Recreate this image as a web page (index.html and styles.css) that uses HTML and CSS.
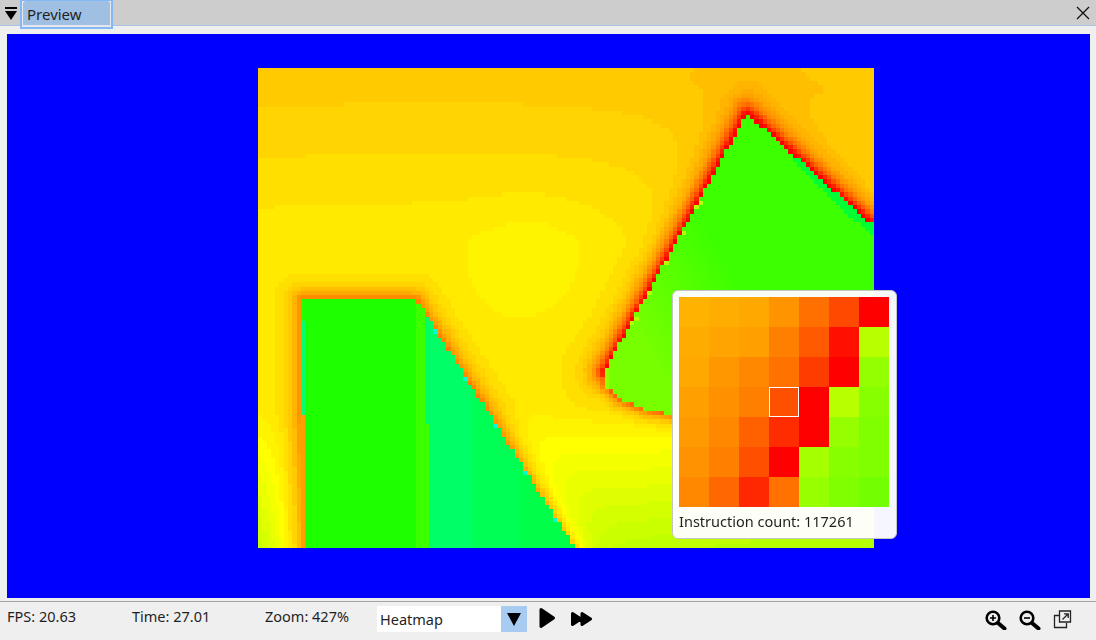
FILE: index.html
```html
<!DOCTYPE html>
<html lang="en">
<head>
<meta charset="utf-8">
<title>Preview</title>
<link rel="stylesheet" href="styles.css">
</head>
<body>
<div class="app">
  <header class="tabbar">
    <svg class="menu-icon" width="14" height="16" viewBox="0 0 14 16"><rect x="1" y="3" width="12" height="2"/><path d="M1 7h12l-6 9z"/></svg>
    <div class="tab">Preview</div>
    <svg class="close-icon" width="14" height="14" viewBox="0 0 14 14"><path d="M1 1l12 12M13 1L1 13"/></svg>
  </header>
  <main class="viewport">
    <canvas id="heat" class="heat" width="144" height="112"></canvas>
    <div class="tip">
      <div class="tip-grid">
        <i style="background:#ffb300"></i><i style="background:#ffad00"></i><i style="background:#ffa800"></i><i style="background:#ff9400"></i><i style="background:#ff7000"></i><i style="background:#ff4800"></i><i style="background:#ff0000"></i>
        <i style="background:#ffac00"></i><i style="background:#ffa400"></i><i style="background:#ff9f00"></i><i style="background:#ff8000"></i><i style="background:#ff5a00"></i><i style="background:#ff1000"></i><i style="background:#b8ff00"></i>
        <i style="background:#ffa800"></i><i style="background:#ff9800"></i><i style="background:#ff8800"></i><i style="background:#ff7200"></i><i style="background:#ff3c00"></i><i style="background:#ff0000"></i><i style="background:#93ff00"></i>
        <i style="background:#ffa000"></i><i style="background:#ff9000"></i><i style="background:#ff7f00"></i><i class="picked" style="background:#ff5000"></i><i style="background:#ff0000"></i><i style="background:#b8ff00"></i><i style="background:#88ff00"></i>
        <i style="background:#ff9a00"></i><i style="background:#ff8800"></i><i style="background:#ff6000"></i><i style="background:#ff2c00"></i><i style="background:#ff0000"></i><i style="background:#95ff00"></i><i style="background:#7fff00"></i>
        <i style="background:#ff9200"></i><i style="background:#ff8000"></i><i style="background:#ff5000"></i><i style="background:#ff0000"></i><i style="background:#a6ff00"></i><i style="background:#88ff00"></i><i style="background:#7fff00"></i>
        <i style="background:#ff8800"></i><i style="background:#ff6800"></i><i style="background:#ff2800"></i><i style="background:#ff7200"></i><i style="background:#96ff00"></i><i style="background:#7fff00"></i><i style="background:#72ff00"></i>
      </div>
      <div class="tip-text">Instruction count: 117261</div>
    </div>
  </main>
  <footer class="status">
    <span class="stat stat-fps">FPS: 20.63</span>
    <span class="stat stat-time">Time: 27.01</span>
    <span class="stat stat-zoom">Zoom: 427%</span>
    <div class="combo">
      <span class="combo-label">Heatmap</span>
      <span class="combo-btn"><svg width="14" height="13" viewBox="0 0 14 13"><path d="M0 0h14L7 13z"/></svg></span>
    </div>
    <svg class="play" width="17" height="22" viewBox="0 0 17 22"><path d="M2 2.500L14.500 11 2 19.500z"/></svg>
    <svg class="ffwd" width="21" height="14" viewBox="0 0 21 14"><path d="M1.500 1.500L10 7l-8.500 5.500zM11 1.500L19.500 7 11 12.500z"/></svg>
    <span class="spacer"></span>
    <svg class="tool" width="22" height="20" viewBox="0 0 22 20"><circle cx="8" cy="8" r="6.300"/><path class="handle" d="M13 13l6.500 5.500"/><path class="thin" d="M5 8h6M8 5v6"/></svg>
    <svg class="tool" width="22" height="20" viewBox="0 0 22 20"><circle cx="8" cy="8" r="6.300"/><path class="handle" d="M13 13l6.500 5.500"/><path class="thin" d="M5 8h6"/></svg>
    <svg class="tool-copy" width="19" height="19" viewBox="0 0 19 19"><path d="M6.500 1h11v11h-11zM6 5.500H1.500v12h12V13"/><path d="M9.500 9.500L15 4M11 3.800h4.200V8"/></svg>
  </footer>
</div>
<script src="app.js"></script>
</body>
</html>
```
FILE: styles.css
```css
* { box-sizing: border-box; }
html, body { margin: 0; padding: 0; }
body { width: 1096px; height: 640px; overflow: hidden; background: #efefef; font-family: "Noto Sans", sans-serif; font-size: 14.5px; color: #1f1f1f; }
.app { display: flex; flex-direction: column; height: 640px; }

.tabbar { position: relative; flex: none; height: 26px; background: #cdcdcd; border-bottom: 1px solid #a9c4e2; display: flex; align-items: flex-start; }
.menu-icon { margin: 4px 2px 0 4px; flex: none; }
.tab { width: 93px; height: 29px; border: 2px solid #84b9f5; border-top-width: 1px; position: relative; z-index: 1; background: #e4e8ee; font-size: 15px; line-height: 26px; padding-left: 5px; }
.tab::before { content: ""; position: absolute; left: 1px; right: 1px; top: 0; height: 24px; background: #9fc0e3; border-radius: 3px 3px 0 0; z-index: -1; }
.close-icon { margin: 6px 6px 0 auto; fill: none; stroke: #111; stroke-width: 1.300; flex: none; }

.viewport { position: relative; flex: none; height: 564px; margin: 8px 6px 0 7px; background: #0000ff; }
.heat { position: absolute; left: 251px; top: 34px; width: 616px; height: 480px; image-rendering: pixelated; display: block; }

.tip { position: absolute; left: 665px; top: 256px; width: 225px; height: 249px; padding: 6px; border: 1px solid #c4c4c4; border-radius: 6px; background: rgba(255, 255, 255, .965); }
.tip-grid { display: grid; grid-template-columns: repeat(7, 30px); grid-auto-rows: 30px; }
.tip-grid i { display: block; }
.tip-grid .picked { border: 1px solid #fff; }
.tip-text { margin-top: 4px; line-height: 20px; white-space: nowrap; }

.status { flex: none; margin-top: 3px; height: 38px; border-top: 1px solid #a3a3a3; padding: 4px 5px 0 7px; display: flex; align-items: flex-start; }
.stat { white-space: nowrap; line-height: 21px; }
.stat-fps { width: 125px; }
.stat-time { width: 133px; }
.stat-zoom { width: 112px; }
.combo { width: 150px; height: 26px; background: #fff; display: flex; flex: none; }
.combo-label { flex: 1; padding-left: 3px; line-height: 26px; }
.combo-btn { width: 26px; background: #a8cbf2; display: flex; align-items: center; justify-content: center; }
.combo-btn svg { display: block; }
.play { margin: 1px 0 0 12px; flex: none; stroke: #000; stroke-width: 3; stroke-linejoin: round; }
.ffwd { margin: 6px 0 0 15px; flex: none; stroke: #000; stroke-width: 3; stroke-linejoin: round; }
.spacer { flex: 1; }
.tool { flex: none; margin: 4px 12px 0 0; fill: none; stroke: #000; stroke-width: 2.600; }
.tool .handle { stroke-width: 4; stroke-linecap: round; }
.tool .thin { stroke-width: 1.600; }
.tool-copy { flex: none; margin: 4px 19px 0 0; fill: none; stroke: #222; stroke-width: 1.300; }
```
FILE: app.js
```js
(function () {
  var cv = document.getElementById('heat');
  var ctx = cv.getContext('2d');
  var W = 144, H = 112, SX = 616 / W, SY = 480 / H, OX = 258, OY = 68;

  var rectShape = [[301, 299], [416, 299], [575, 548], [301, 548]];
  var triShape = [[747, 114], [874, 226], [874, 430], [672, 414], [648, 410], [620, 399], [604, 385], [604, 372]];

  function inside(p, x, y) {
    var c = false;
    for (var i = 0, j = p.length - 1; i < p.length; j = i++) {
      if ((p[i][1] > y) !== (p[j][1] > y) &&
          x < (p[j][0] - p[i][0]) * (y - p[i][1]) / (p[j][1] - p[i][1]) + p[i][0]) c = !c;
    }
    return c;
  }
  function segDist(x, y, a, b) {
    var dx = b[0] - a[0], dy = b[1] - a[1];
    var t = ((x - a[0]) * dx + (y - a[1]) * dy) / (dx * dx + dy * dy);
    t = Math.max(0, Math.min(1, t));
    return Math.hypot(x - a[0] - t * dx, y - a[1] - t * dy);
  }
  function polyDist(p, x, y, n) {
    var d = 1e9;
    for (var i = 0; i < n; i++) d = Math.min(d, segDist(x, y, p[i], p[(i + 1) % p.length]));
    return d;
  }
  function clamp(v, a, b) { return Math.max(a, Math.min(b, v)); }

  function baseHue(x, y) {
    var bow = Math.pow((x - 440) / 300, 2) * 14;
    var h = 47 + 8.500 * clamp((y - 68 - bow) / 170, 0, 1);
    h += 3 * Math.exp(-(Math.pow((x - 530) / 55, 2) + Math.pow((y - 262) / 55, 2)));
    h += 18 * clamp((y - 405) / 143, 0, 1);
    h += 4 * clamp((y - 440) / 108, 0, 1) * clamp((x - 560) / 200, 0, 1);
    h -= 10 * clamp((y - 405) / 143, 0, 1) * clamp((x - 258) / 30, 0, 1) * clamp((320 - x) / 30, 0, 1);
    return h;
  }

  function hueAt(x, y) {
    if (inside(rectShape, x, y)) {
      if (x < 305) {
        if (y < 320) return 112;
        if (y < 415) return 148;
        return 38;
      }
      if (x < 416) return 113;
      if (x < 426) return 106;
      if (x < 430 && y > 425) return 106;
      if (y > 290 && segDist(x, y, rectShape[1], rectShape[2]) < 3 && (Math.round(y) % 47 < 6)) return 170;
      return x < 470 ? 144 : x < 520 ? 140 : 137;
    }
    if (inside(triShape, x, y)) {
      var rd = segDist(x, y, triShape[0], triShape[1]);
      if (x > 793 && rd < 6 + (x - 793) * 0.04) return 132;
      if (x < 610) return 84;
      var ld = segDist(x, y, triShape[7], triShape[0]);
      if (ld < 4 && y > 200 && y < 330 && Math.round(y) % 29 < 5) return 78;
      return 92 + 14 * clamp((x - 620 + (300 - y) * 0.55) / 130, 0, 1);
    }
    var h = baseHue(x, y);
    var dr = polyDist(rectShape, x, y, 4);
    var a = segDist(x, y, triShape[7], triShape[0]);
    var b = segDist(x, y, triShape[0], triShape[1]);
    var c = polyDist([triShape[3], triShape[4], triShape[5], triShape[6], triShape[7]], x, y, 4);
    var da = Math.min(a, b);
    var drop = Math.max(26 * Math.exp(-dr / 10),
      58 * Math.exp(-da / 8.500) + 5 * Math.exp(-da / 36),
      34 * Math.exp(-c / 7));
    return Math.max(0, h - drop);
  }

  var img = ctx.createImageData(W, H);
  for (var j = 0; j < H; j++) {
    for (var i = 0; i < W; i++) {
      var hue = hueAt(OX + (i + 0.5) * SX, OY + (j + 0.5) * SY);
      if (hue < 85) hue = Math.round(hue / 2.500) * 2.500;
      var r = 255, g = 255, b2 = 0;
      if (hue <= 60) g = hue / 60 * 255;
      else if (hue <= 120) r = (120 - hue) / 60 * 255;
      else { r = 0; b2 = (hue - 120) / 60 * 255; }
      var k = (j * W + i) * 4;
      img.data[k] = r; img.data[k + 1] = g; img.data[k + 2] = b2; img.data[k + 3] = 255;
    }
  }
  ctx.putImageData(img, 0, 0);
})();
```
